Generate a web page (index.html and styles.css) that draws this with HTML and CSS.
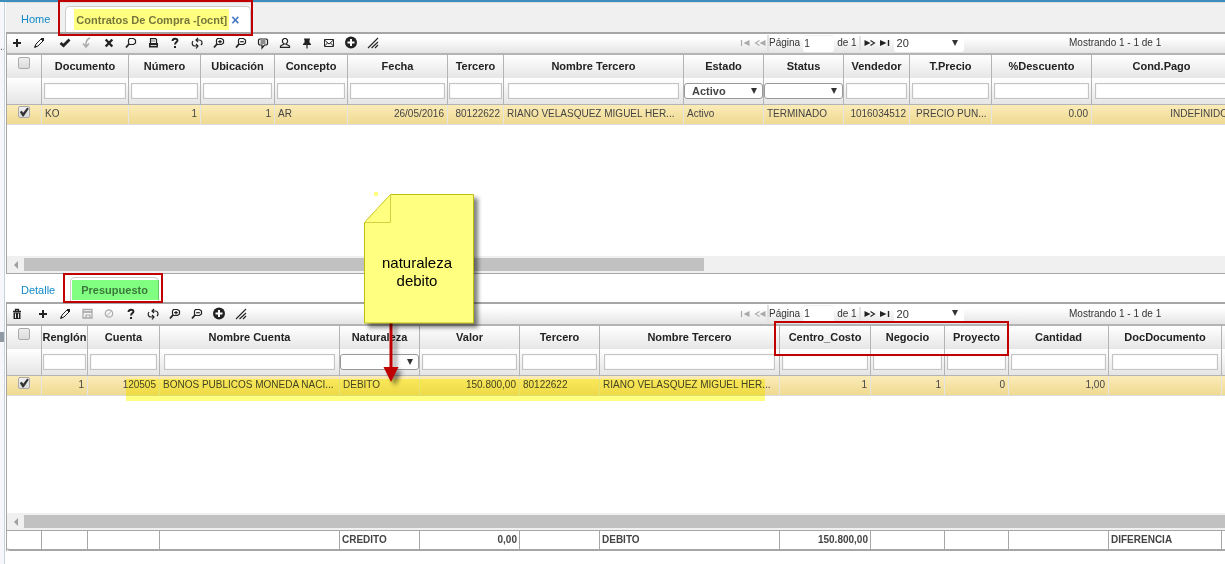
FILE: index.html
```html
<!DOCTYPE html>
<html lang="es">
<head>
<meta charset="utf-8">
<title>Contratos De Compra</title>
<link rel="stylesheet" href="styles.css">
</head>
<body>
<svg class="sprite" aria-hidden="true">
  <symbol id="i-plus" viewBox="0 0 14 14"><path d="M7 3v8M3 7h8" stroke="currentColor" stroke-width="2"/></symbol>
  <symbol id="i-pencil" viewBox="0 0 14 14"><path d="M3 11l1-3 5-5 2 2-5 5z" fill="none" stroke="currentColor" stroke-width="1"/><path d="M9 2l3 0 0 3-1 0-2-2zM2 12l1-3 2 2z" fill="currentColor"/></symbol>
  <symbol id="i-check" viewBox="0 0 14 14"><path d="M2.500 7l3 2.500 6-6" fill="none" stroke="currentColor" stroke-width="2.800"/></symbol>
  <symbol id="i-undo" viewBox="0 0 14 14"><path d="M10 2C7 3 6 5 6 8v3M3 7.500l3 3.500 3-3.500" fill="none" stroke="currentColor" stroke-width="1.500"/></symbol>
  <symbol id="i-cross" viewBox="0 0 14 14"><path d="M3.700 3.500l6.600 7M10.300 3.500l-6.600 7" stroke="currentColor" stroke-width="2.400"/></symbol>
  <symbol id="i-search" viewBox="0 0 14 14"><path d="M5.500 2.500h4l2 1.500v3l-2 1.500h-4L4.500 7V4z" fill="none" stroke="currentColor" stroke-width="1.200"/><path d="M5 8l-3 3.500" stroke="currentColor" stroke-width="1.800"/></symbol>
  <symbol id="i-zoomin" viewBox="0 0 14 14"><use href="#i-search"/><path d="M8 4v3.500M6.200 5.700h3.600" stroke="currentColor" stroke-width="1.200"/></symbol>
  <symbol id="i-zoomout" viewBox="0 0 14 14"><use href="#i-search"/><path d="M6.200 5.700h3.600" stroke="currentColor" stroke-width="1.200"/></symbol>
  <symbol id="i-print" viewBox="0 0 14 14"><path d="M4.500 7V2.600h5l1 1V7" fill="none" stroke="currentColor" stroke-width="1.200"/><path d="M3 7h9v4.500H3z" fill="currentColor"/><path d="M5 5h4" stroke="#777"/><path d="M4.500 9.500h6" stroke="#fff" stroke-width=".8"/></symbol>
  <symbol id="i-help" viewBox="0 0 14 14"><path d="M4.500 5c0-3 5-3 5-.5C9.500 6 7 6.200 7 8.500" fill="none" stroke="currentColor" stroke-width="1.900"/><path d="M6 10h2v2H6z" fill="currentColor"/></symbol>
  <symbol id="i-refresh" viewBox="0 0 14 14"><path d="M8 2L6 4l2 2M6 4h3c3 0 4 3 2 5M6 8l2 2-2 2.500M8 10H5C2 10 1.500 7 3 5" fill="none" stroke="currentColor" stroke-width="1.200"/></symbol>
  <symbol id="i-comment" viewBox="0 0 14 14"><path d="M3.500 3h7l1 1v4l-1 1H8.500L6 12V9H3.500l-1-1V4z" fill="none" stroke="currentColor" stroke-width="1.200"/><path d="M4.500 5h5M4.500 7h5" stroke="currentColor"/></symbol>
  <symbol id="i-person" viewBox="0 0 14 14"><path d="M6 2.500h2L9.500 4v2L8 8H6L4.500 6V4z" fill="none" stroke="currentColor" stroke-width="1.200"/><path d="M6 8L2.500 10v1.400h9V10L8 8" fill="none" stroke="currentColor" stroke-width="1.200"/></symbol>
  <symbol id="i-pin" viewBox="0 0 14 14"><path d="M4 2.500h6v1H9.500v3l1.500 1.500v1H3V8l1.500-1.500v-3H4z" fill="currentColor"/><path d="M7 8v4.500" stroke="currentColor" stroke-width="1.200"/></symbol>
  <symbol id="i-mail" viewBox="0 0 14 14"><path d="M2.500 3.500h9v7h-9zM2.500 4L7 8l4.500-4M2.500 10L5.500 7M11.500 10l-3-3" fill="none" stroke="currentColor"/></symbol>
  <symbol id="i-add" viewBox="0 0 14 14"><circle cx="7" cy="6.500" r="6" fill="currentColor"/><path d="M7 3v7M3.500 6.500h7" stroke="#fff" stroke-width="2"/></symbol>
  <symbol id="i-grip" viewBox="0 0 14 14"><path d="M2 12L12 2M5.500 12L12 6M9 12l3-3" stroke="currentColor" stroke-width="1.100"/></symbol>
  <symbol id="i-trash" viewBox="0 0 14 14"><path d="M3 4.500h8M5.500 4V2.500h3V4" fill="none" stroke="currentColor" stroke-width="1.300"/><path d="M3.500 5.500h7V12h-7z" fill="currentColor"/><path d="M5.500 6.500v4.500M8.500 6.500v4.500" stroke="#eee"/></symbol>
  <symbol id="i-save" viewBox="0 0 14 14"><path d="M3 2.500h9V11H3z" fill="none" stroke="currentColor" stroke-width="1.300"/><path d="M3 5h9" stroke="currentColor" stroke-width="1.800"/><path d="M6 11V8h4v3" fill="none" stroke="currentColor" stroke-width="1.200"/></symbol>
  <symbol id="i-ban" viewBox="0 0 14 14"><circle cx="7" cy="6.500" r="3.700" fill="none" stroke="currentColor" stroke-width="1.200"/><path d="M4.500 9l5-5" stroke="currentColor"/></symbol>
  <symbol id="i-first" viewBox="0 0 12 8"><path d="M2.500 1v6" stroke="currentColor" stroke-width="1.200"/><path d="M10.500 1v6L4.500 4z" fill="currentColor"/></symbol>
  <symbol id="i-prev" viewBox="0 0 12 8"><path d="M5.500 1.500L1.500 4l4 2.500" fill="none" stroke="currentColor" stroke-width="1.100"/><path d="M11.500 1v6L5.500 4z" fill="currentColor"/></symbol>
  <symbol id="i-next" viewBox="0 0 12 8"><path d="M6.500 1.500l4 2.500-4 2.500" fill="none" stroke="currentColor" stroke-width="1.100"/><path d="M.5 1v6l6-3z" fill="currentColor"/></symbol>
  <symbol id="i-last" viewBox="0 0 12 8"><path d="M9.500 1v6" stroke="currentColor" stroke-width="1.400"/><path d="M1 1v6l6.500-3z" fill="currentColor"/></symbol>
</svg>

<div class="topbar"></div>
<div class="app">
  <aside class="gutter"><span class="gutter-dots">...</span><span class="gutter-handle"></span></aside>
  <main class="main">
    <nav class="tabs tabs-main">
      <a class="tab" href="#home">Home</a>
      <div class="tab tab-active"><a href="#ocnt">Contratos De Compra -[ocnt]</a><button class="tab-close" aria-label="Cerrar">×</button></div>
    </nav>

    <section class="grid">
      <div class="toolbar">
        <div class="tools">
          <button class="tool" aria-label="Agregar"><svg><use href="#i-plus"/></svg></button>
          <button class="tool" aria-label="Editar"><svg><use href="#i-pencil"/></svg></button>
          <span class="tool-gap"></span>
          <button class="tool" aria-label="Aprobar"><svg><use href="#i-check"/></svg></button>
          <button class="tool" aria-label="Deshacer" disabled><svg><use href="#i-undo"/></svg></button>
          <button class="tool" aria-label="Anular"><svg><use href="#i-cross"/></svg></button>
          <button class="tool" aria-label="Buscar"><svg><use href="#i-search"/></svg></button>
          <button class="tool" aria-label="Imprimir"><svg><use href="#i-print"/></svg></button>
          <button class="tool" aria-label="Ayuda"><svg><use href="#i-help"/></svg></button>
          <button class="tool" aria-label="Recargar"><svg><use href="#i-refresh"/></svg></button>
          <button class="tool" aria-label="Acercar"><svg><use href="#i-zoomin"/></svg></button>
          <button class="tool" aria-label="Alejar"><svg><use href="#i-zoomout"/></svg></button>
          <button class="tool" aria-label="Comentario"><svg><use href="#i-comment"/></svg></button>
          <button class="tool" aria-label="Tercero"><svg><use href="#i-person"/></svg></button>
          <button class="tool" aria-label="Fijar"><svg><use href="#i-pin"/></svg></button>
          <button class="tool" aria-label="Correo"><svg><use href="#i-mail"/></svg></button>
          <button class="tool" aria-label="Más"><svg><use href="#i-add"/></svg></button>
          <button class="tool" aria-label="Columnas"><svg><use href="#i-grip"/></svg></button>
        </div>
        <div class="pager">
          <button class="page-btn" aria-label="Primera" disabled><svg><use href="#i-first"/></svg></button>
          <button class="page-btn" aria-label="Anterior" disabled><svg><use href="#i-prev"/></svg></button>
          <label class="page-label">Página <input class="page-input" value="1"></label>
          <span class="page-total">de 1</span>
          <button class="page-btn" aria-label="Siguiente"><svg><use href="#i-next"/></svg></button>
          <button class="page-btn" aria-label="Última"><svg><use href="#i-last"/></svg></button>
          <span class="drop page-size"><select aria-label="Filas por página"><option>20</option></select></span>
        </div>
        <div class="records">Mostrando 1 - 1 de 1</div>
      </div>
      <div class="grid-body body-contracts">
        <table class="data">
          <colgroup><col class="w35"><col class="w87"><col class="w72"><col class="w74"><col class="w73"><col class="w100"><col class="w56"><col class="w180"><col class="w80"><col class="w80"><col class="w66"><col class="w82"><col class="w100"><col class="w140"></colgroup>
          <thead>
            <tr class="heads"><th class="pick"><input type="checkbox" aria-label="Todos"></th><th>Documento</th><th>Número</th><th>Ubicación</th><th>Concepto</th><th>Fecha</th><th>Tercero</th><th>Nombre Tercero</th><th>Estado</th><th>Status</th><th>Vendedor</th><th>T.Precio</th><th>%Descuento</th><th>Cond.Pago</th></tr>
            <tr class="filters"><td></td><td><input aria-label="Documento"></td><td><input aria-label="Número"></td><td><input aria-label="Ubicación"></td><td><input aria-label="Concepto"></td><td><input aria-label="Fecha"></td><td><input aria-label="Tercero"></td><td><input aria-label="Nombre Tercero"></td><td><span class="drop"><select aria-label="Estado"><option>Activo</option></select></span></td><td><span class="drop"><select aria-label="Status"><option></option></select></span></td><td><input aria-label="Vendedor"></td><td><input aria-label="T.Precio"></td><td><input aria-label="%Descuento"></td><td><input aria-label="Cond.Pago"></td></tr>
          </thead>
          <tbody>
            <tr><td class="pick"><input type="checkbox" aria-label="Fila 1" checked></td><td>KO</td><td class="num">1</td><td class="num">1</td><td>AR</td><td class="num">26/05/2016</td><td class="num">80122622</td><td>RIANO VELASQUEZ MIGUEL HER...</td><td>Activo</td><td>TERMINADO</td><td class="num">1016034512</td><td class="indent">PRECIO PUN...</td><td class="num">0.00</td><td class="num">INDEFINIDO</td></tr>
          </tbody>
        </table>
      </div>
      <div class="scroll"><span class="scroll-arrow"></span><div class="scroll-track"><div class="scroll-thumb" style="width:56.600%"></div></div></div>
    </section>

    <nav class="tabs tabs-sub">
      <a class="tab" href="#detalle">Detalle</a>
      <div class="tab tab-active"><a href="#presupuesto">Presupuesto</a></div>
    </nav>

    <section class="grid grid-budget">
      <div class="toolbar">
        <div class="tools">
          <button class="tool" aria-label="Borrar"><svg><use href="#i-trash"/></svg></button>
          <span class="tool-gap"></span>
          <button class="tool" aria-label="Agregar"><svg><use href="#i-plus"/></svg></button>
          <button class="tool" aria-label="Editar"><svg><use href="#i-pencil"/></svg></button>
          <button class="tool" aria-label="Guardar" disabled><svg><use href="#i-save"/></svg></button>
          <button class="tool" aria-label="Cancelar" disabled><svg><use href="#i-ban"/></svg></button>
          <button class="tool" aria-label="Ayuda"><svg><use href="#i-help"/></svg></button>
          <button class="tool" aria-label="Recargar"><svg><use href="#i-refresh"/></svg></button>
          <button class="tool" aria-label="Acercar"><svg><use href="#i-zoomin"/></svg></button>
          <button class="tool" aria-label="Alejar"><svg><use href="#i-zoomout"/></svg></button>
          <button class="tool" aria-label="Más"><svg><use href="#i-add"/></svg></button>
          <button class="tool" aria-label="Columnas"><svg><use href="#i-grip"/></svg></button>
        </div>
        <div class="pager">
          <button class="page-btn" aria-label="Primera" disabled><svg><use href="#i-first"/></svg></button>
          <button class="page-btn" aria-label="Anterior" disabled><svg><use href="#i-prev"/></svg></button>
          <label class="page-label">Página <input class="page-input" value="1"></label>
          <span class="page-total">de 1</span>
          <button class="page-btn" aria-label="Siguiente"><svg><use href="#i-next"/></svg></button>
          <button class="page-btn" aria-label="Última"><svg><use href="#i-last"/></svg></button>
          <span class="drop page-size"><select aria-label="Filas por página"><option>20</option></select></span>
        </div>
        <div class="records">Mostrando 1 - 1 de 1</div>
      </div>
      <div class="grid-body body-budget">
        <table class="data">
          <colgroup><col class="w35"><col class="w46"><col class="w72"><col class="w180"><col class="w80"><col class="w100"><col class="w80"><col class="w180"><col class="w91"><col class="w74"><col class="w64"><col class="w100"><col class="w113"><col class="w140"></colgroup>
          <thead>
            <tr class="heads"><th class="pick"><input type="checkbox" aria-label="Todos"></th><th>Renglón</th><th>Cuenta</th><th>Nombre Cuenta</th><th>Naturaleza</th><th>Valor</th><th>Tercero</th><th>Nombre Tercero</th><th>Centro_Costo</th><th>Negocio</th><th>Proyecto</th><th>Cantidad</th><th>DocDocumento</th><th></th></tr>
            <tr class="filters"><td></td><td><input aria-label="Renglón"></td><td><input aria-label="Cuenta"></td><td><input aria-label="Nombre Cuenta"></td><td><span class="drop"><select aria-label="Naturaleza"><option></option></select></span></td><td><input aria-label="Valor"></td><td><input aria-label="Tercero"></td><td><input aria-label="Nombre Tercero"></td><td><input aria-label="Centro_Costo"></td><td><input aria-label="Negocio"></td><td><input aria-label="Proyecto"></td><td><input aria-label="Cantidad"></td><td><input aria-label="DocDocumento"></td><td><input aria-label="Documento"></td></tr>
          </thead>
          <tbody>
            <tr><td class="pick"><input type="checkbox" aria-label="Fila 1" checked></td><td class="num">1</td><td class="num">120505</td><td>BONOS PUBLICOS MONEDA NACI...</td><td>DEBITO</td><td class="num">150.800,00</td><td>80122622</td><td>RIANO VELASQUEZ MIGUEL HER...</td><td class="num">1</td><td class="num">1</td><td class="num">0</td><td class="num">1,00</td><td></td><td></td></tr>
          </tbody>
        </table>
      </div>
      <div class="scroll"><span class="scroll-arrow"></span><div class="scroll-track"><div class="scroll-thumb" style="width:100%"></div></div></div>
      <div class="totals">
        <table class="data">
          <colgroup><col class="w35"><col class="w46"><col class="w72"><col class="w180"><col class="w80"><col class="w100"><col class="w80"><col class="w180"><col class="w91"><col class="w74"><col class="w64"><col class="w100"><col class="w113"><col class="w140"></colgroup>
          <tfoot>
            <tr><td></td><td></td><td></td><td></td><td>CREDITO</td><td class="num">0,00</td><td></td><td>DEBITO</td><td class="num">150.800,00</td><td></td><td></td><td></td><td>DIFERENCIA</td><td></td></tr>
          </tfoot>
        </table>
      </div>
    </section>
  </main>
</div>

<!-- Notes laid over the screen -->
<div class="marker marker-tab"></div>
<div class="marker marker-budget"></div>
<div class="marker marker-row"></div>
<div class="marker marker-dot"></div>
<div class="frame frame-tab"></div>
<div class="frame frame-budget"></div>
<div class="frame frame-columns"></div>
<svg class="arrow" viewBox="0 0 30 68" aria-hidden="true"><path d="M11.500 0h3v46h6l-7.500 15L5.500 46h6z" fill="#c00000"/></svg>
<div class="note">
  <svg class="note-paper" viewBox="0 0 110 130" aria-hidden="true"><path d="M26.500 .5h83v128.500H.5V28.500z" fill="#ffff80" stroke="#bfbf10"/><path d="M26.500 .5v28H.5z" fill="#ffff80" stroke="#d0d040"/></svg>
  <p class="note-text">naturaleza<br>debito</p>
</div>
</body>
</html>
```
FILE: styles.css
```css
* { box-sizing: border-box; }

body {
  position: relative;
  margin: 0;
  min-height: 100vh;
  display: flex;
  flex-direction: column;
  overflow: hidden;
  background: #fff;
  color: #444;
  font: 10px/14px "Liberation Sans", Arial, sans-serif;
}

button, input, select { font: inherit; color: inherit; margin: 0; }
button { padding: 0; border: 0; background: none; }
a { color: inherit; text-decoration: none; }
.sprite { position: absolute; width: 0; height: 0; }

.topbar { height: 2px; background: #3c8dbc; }
.app { display: flex; flex: 1; }
.gutter {
  flex: 0 0 5px;
  border-right: 1px solid #c9d0de;
  background: #f5f7fb;
  overflow: hidden;
  display: flex;
  flex-direction: column;
}
.gutter-dots { margin-top: 38px; color: #555; }
.gutter-handle { width: 4px; height: 10px; margin-top: 278px; background: #8f99a3; }
.main { flex: 1; min-width: 0; padding-left: 1px; }

/* Tabs */
.tabs { display: flex; font-size: 11px; }
.tabs .tab { display: flex; align-items: center; padding: 0 15px; color: #1289c9; }
.tabs .tab-active {
  padding: 0 10px;
  border: 1px solid #ccc;
  border-bottom: 0;
  border-radius: 5px 5px 0 0;
  background: #fff;
  color: #777;
  font-weight: bold;
}
.tabs-main {
  height: 32px;
  padding-top: 3px;
  border-top: 1px solid #ddd;
  border-bottom: 2px solid #a6a6a6;
  background: #f0f0f0;
}
.tabs-sub { height: 31px; padding-top: 3px; border-top: 1px solid #a6a6a6; border-bottom: 2px solid #a6a6a6; }
.tab-close { margin-left: 3px; width: 10px; color: #4678c0; font-size: 14px; line-height: 14px; }

/* Toolbar */
.grid { border-left: 1px solid #a6a6a6; }
.toolbar {
  display: grid;
  grid-template-columns: 730fr 331fr 157fr;
  align-items: center;
  height: 21px;
  padding-bottom: 1px;
  border-bottom: 2px solid #b4b4b4;
  background: linear-gradient(#fff 20%, #e4e4e4);
  color: #333;
}
.grid-budget .toolbar { height: 22px; }
.tools, .pager { display: flex; align-items: center; min-width: 0; }
.tools { margin-left: -1px; }
.tool { display: flex; justify-content: center; flex: 0 0 22px; color: #222; }
.tool svg { width: 14px; height: 14px; }
.tool:disabled, .page-btn:disabled { color: #aaa; }
.tool-gap { flex: 0 0 4px; }
.page-btn { flex: 0 0 15px; height: 14px; color: #222; }
.page-btn svg { display: block; width: 12px; height: 8px; margin: 2px auto; }
.page-label {
  display: flex;
  align-items: center;
  gap: 3px;
  border-left: 2px solid #e2e2e2;
}
.page-input {
  width: 31px;
  height: 17px;
  padding: 0 1px;
  border: 0;
  border-radius: 3px;
  background: #fff;
  box-shadow: inset 0 1px 1px #eee;
}
.page-total { margin: 0 2px 0 3px; padding-right: 2px; border-right: 2px solid #e2e2e2; }
.records { padding-left: 1px; white-space: nowrap; }

/* Tables */
.grid-body { overflow: hidden; }
.body-contracts { min-height: 201px; }
.body-budget { min-height: 187px; }
.data { width: 0; table-layout: fixed; border-spacing: 0; }
.w35 { width: 35px; }
.w46 { width: 46px; }
.w56 { width: 56px; }
.w64 { width: 64px; }
.w66 { width: 66px; }
.w72 { width: 72px; }
.w73 { width: 73px; }
.w74 { width: 74px; }
.w80 { width: 80px; }
.w82 { width: 82px; }
.w87 { width: 87px; }
.w91 { width: 91px; }
.w100 { width: 100px; }
.w113 { width: 113px; }
.w140 { width: 140px; }
.w180 { width: 180px; }
.data th, .data td { padding: 0; overflow: hidden; white-space: nowrap; }
.heads { height: 23px; background: linear-gradient(#fff, #e6e6e6); color: #222; font-size: 11px; }
.data .heads th { padding-bottom: 2px; border-right: 1px solid #b4b4b4; }
.filters { height: 27px; background: linear-gradient(#fff, #e4e4e4); }
.filters td { border-right: 1px solid #b4b4b4; border-bottom: 1px solid #b4b4b4; text-align: center; }
.filters input {
  display: block;
  width: 95%;
  height: 16px;
  margin: 0 auto;
  border: 1px solid #c4c4c4;
  background: #fff;
  box-shadow: inset 0 0 1px #bbb;
}
.data tbody tr { height: 20px; background: linear-gradient(#fbebb8, #eed98f); }
.data tbody td {
  padding: 0 3px 1px;
  border-right: 1px solid #e4e4e4;
  border-bottom: 1px solid #ddd;
}
.data tbody .indent { padding-left: 6px; }
.data .num { text-align: right; }
.data .heads .pick { vertical-align: top; padding: 2px 0 0; }
.data tbody .pick { vertical-align: top; padding: 1px 0 0; }
.pick input {
  appearance: none;
  display: block;
  width: 12px;
  height: 12px;
  margin: 0 auto;
  border: 1px solid #aaa;
  border-radius: 2px;
  background: linear-gradient(#eee, #dcdcdc);
}
.pick input:checked::after {
  content: "";
  display: block;
  width: 10px;
  height: 10px;
  background: #333;
  clip-path: polygon(8% 50%, 28% 38%, 42% 58%, 82% 5%, 98% 18%, 46% 95%, 36% 95%);
}

/* Drop-downs */
.drop { position: relative; display: block; }
.drop select {
  appearance: none;
  display: block;
  width: 100%;
  height: 16px;
  padding: 0 7px;
  border: 1px solid #999;
  border-radius: 3px;
  background: #fff;
}
.filters select { font-size: 11px; font-weight: bold; }
.drop::after {
  content: "";
  position: absolute;
  right: 6px;
  top: 5px;
  border: 3px solid transparent;
  border-top: 6px solid #333;
  border-bottom: 0;
  pointer-events: none;
}
.page-size { width: 70px; margin-left: 1px; }
.page-size select { height: 17px; padding: 0 3px; border: 0; font-size: 11px; }

/* Scroll bar */
.scroll { display: flex; height: 17px; padding: 2px 0; background: #f0f0f0; }
.scroll-arrow { flex: 0 0 17px; display: flex; align-items: center; justify-content: center; }
.scroll-arrow::before { content: ""; border: 4px solid transparent; border-right-color: #a0a0a0; border-left: 0; }
.scroll-track { flex: 1; }
.scroll-thumb { height: 13px; background: #c1c1c1; }

.totals {
  overflow: hidden;
  border-top: 1px solid #a6a6a6;
  border-bottom: 2px solid #a6a6a6;
  border-bottom-left-radius: 3px;
  font-weight: bold;
}
.totals tr { height: 18px; }
.totals td { border-right: 1px solid #a6a6a6; }
.totals .data td { padding: 0 2px; }

/* Overlaid notes */
.marker { position: absolute; background: #ffff80; mix-blend-mode: multiply; }
.marker-tab { left: 74px; top: 9px; width: 155px; height: 21px; }
.marker-budget { left: 72px; top: 280px; width: 87px; height: 20px; background: #80ff80; }
.marker-row { left: 126px; top: 379px; width: 639px; height: 22px; }
.marker-dot { left: 374px; top: 192px; width: 4px; height: 4px; }
.frame { position: absolute; border: 2px solid #c00000; }
.frame-tab { left: 58px; top: 0; width: 195px; height: 36px; }
.frame-budget { left: 63px; top: 273px; width: 100px; height: 30px; }
.frame-columns { left: 774px; top: 321px; width: 235px; height: 35px; }
.arrow { position: absolute; left: 378px; top: 321px; width: 30px; height: 68px; filter: drop-shadow(4px 4px 2px rgba(0, 0, 0, .45)); }
.note { position: absolute; left: 364px; top: 194px; width: 110px; height: 130px; color: #000; }
.note-paper { position: absolute; inset: 0; width: 110px; height: 130px; filter: drop-shadow(4px 4px 2px rgba(0, 0, 0, .5)); }
.note-text { position: relative; margin: 0; padding: 60px 4px 0 0; font-size: 15px; line-height: 18px; text-align: center; }
```
